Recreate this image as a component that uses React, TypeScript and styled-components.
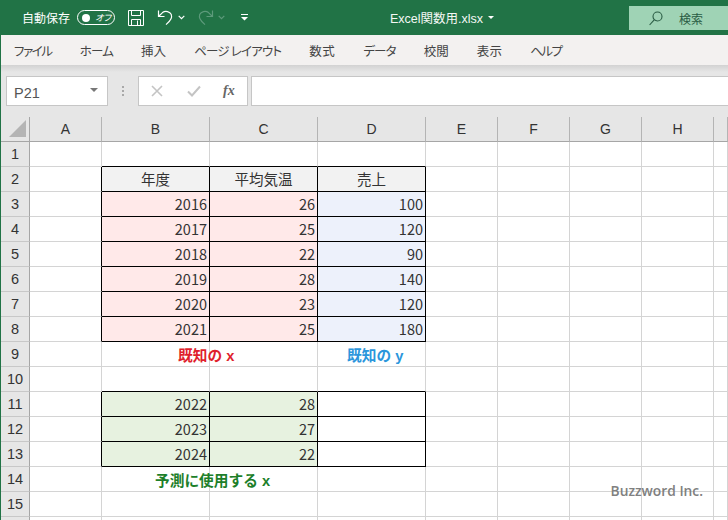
import React from "react";
import styled, { createGlobalStyle } from "styled-components";

const JP = `"Noto Sans CJK JP", "Liberation Sans", sans-serif`;

const GlobalStyle = createGlobalStyle`
  html, body {
    margin: 0;
    padding: 0;
    background: #fff;
    font-family: ${JP};
  }
`;

const Page = styled.div`
  width: 728px;
  height: 520px;
  overflow: hidden;
  position: relative;
  display: flex;
  flex-direction: column;
`;

const TitleBar = styled.header`
  height: 35px;
  flex: none;
  background: #217346;
  color: #fff;
  display: flex;
  align-items: center;
  font-size: 12px;
  padding-left: 22px;
`;

const AutoSave = styled.span`
  font-feature-settings: "palt";
  width: 55px;
  flex: none;
`;

const Toggle = styled.span`
  width: 38px;
  height: 15px;
  flex: none;
  box-sizing: border-box;
  border: 1px solid #fff;
  border-radius: 8px;
  display: flex;
  align-items: center;
  justify-content: space-between;
  padding: 0 3px 0 4px;
  font-size: 9px;
  font-style: italic;
  font-feature-settings: "palt";
  &::before {
    content: "";
    width: 8px;
    height: 8px;
    border-radius: 50%;
    background: #fff;
  }
`;

const QuickIcon = styled.svg<{ $gap: number }>`
  flex: none;
  margin-left: ${(p) => p.$gap}px;
  display: block;
`;

const FileName = styled.span`
  margin-left: 142px;
  width: 99px;
  flex: none;
  font-size: 12.5px;
  font-feature-settings: "palt";
  color: #f4f8f5;
  font-family: "Liberation Sans", ${JP};
`;

const SearchBox = styled.div`
  margin-left: 135px;
  flex: 1;
  height: 24px;
  margin-top: 1px;
  background: #9fd3b5;
  display: flex;
  align-items: center;
  padding-left: 20px;
  gap: 16px;
  color: #2a5c44;
  font-size: 12px;
`;

const TabBar = styled.nav`
  height: 30px;
  flex: none;
  background: #f3f1f0;
  display: flex;
  align-items: center;
  gap: 28px;
  padding-left: 13px;
  border-left: 1px solid #217346;
`;

const Tab = styled.span<{ $squeeze: number }>`
  font-size: 12.5px;
  letter-spacing: ${(p) => p.$squeeze}px;
  color: #444;
  font-feature-settings: "palt";
`;

const FormulaArea = styled.div`
  height: 52px;
  flex: none;
  box-sizing: border-box;
  border-left: 1px solid #217346;
  background: linear-gradient(#d2d2d2 0, #e6e6e6 7px);
  padding: 11px 0 11px 5px;
  display: flex;
  align-items: stretch;
`;

const NameBox = styled.div`
  width: 102px;
  box-sizing: border-box;
  background: #fff;
  border: 1px solid #c6c6c6;
  display: flex;
  align-items: center;
  justify-content: space-between;
  padding: 3px 9px 0 7px;
  font-size: 14.5px;
  color: #555;
  font-family: "Liberation Sans", sans-serif;
`;

const Caret = styled.span`
  border-left: 4px solid transparent;
  border-right: 4px solid transparent;
  border-top: 4px solid #777;
  margin-top: -6px;
`;

const Grip = styled.div`
  width: 30px;
  display: flex;
  flex-direction: column;
  align-items: center;
  justify-content: center;
  gap: 2px;
  & i {
    width: 2px;
    height: 2px;
    background: #a8a8a8;
  }
`;

const FxBox = styled.div`
  width: 110px;
  box-sizing: border-box;
  background: #fff;
  border: 1px solid #c6c6c6;
  display: flex;
  align-items: center;
  padding-left: 12px;
`;

const CheckIcon = styled.svg`
  margin-left: 24px;
`;

const FxMark = styled.span`
  margin-left: 22px;
  font-family: "Liberation Serif", serif;
  font-style: italic;
  font-weight: 700;
  font-size: 14px;
  color: #666;
`;

const FormulaInput = styled.div`
  flex: 1;
  margin-left: 3px;
  background: #fff;
  border: 1px solid #c6c6c6;
  border-right: 0;
`;

const Sheet = styled.div`
  flex: 1;
  min-height: 0;
  position: relative;
  border-left: 1px solid #217346;
  display: grid;
  grid-template-columns: 29px 72px 108px 108px 108px 72px 72px 72px 72px 1fr;
  grid-auto-rows: 25px;
  background: #fff;
`;

const Corner = styled.div`
  background: #e6e6e6;
  border-right: 1px solid #a6a6a6;
  border-bottom: 1px solid #a6a6a6;
  box-sizing: border-box;
  display: flex;
  align-items: flex-end;
  justify-content: flex-end;
  padding: 0 3px 4px 0;
  &::before {
    content: "";
    width: 0;
    height: 0;
    border-style: solid;
    border-width: 0 0 17px 17px;
    border-color: transparent transparent #b4b4b4 transparent;
  }
`;

const ColHead = styled.div`
  background: #e6e6e6;
  box-sizing: border-box;
  border-right: 1px solid #b4b4b4;
  border-bottom: 1px solid #a6a6a6;
  display: flex;
  align-items: center;
  justify-content: center;
  font: 14px "Liberation Sans", sans-serif;
  color: #333;
`;

const RowHead = styled.div<{ $row: number }>`
  grid-row: ${(p) => p.$row + 1};
  grid-column: 1;
  background: #e6e6e6;
  box-sizing: border-box;
  border-right: 1px solid #a6a6a6;
  border-bottom: 1px solid #c8c8c8;
  display: flex;
  align-items: center;
  justify-content: center;
  font: 14.5px "Liberation Sans", sans-serif;
  color: #333;
`;

const Cell = styled.div<{
  $row: number;
  $col: number;
  $fill?: string;
  $edgeRight: boolean;
  $edgeBottom: boolean;
  $center?: boolean;
}>`
  grid-row: ${(p) => p.$row + 1};
  grid-column: ${(p) => p.$col + 2};
  background: ${(p) => p.$fill ?? "#fff"};
  box-sizing: border-box;
  border-right: 1px solid ${(p) => (p.$edgeRight ? "#000" : "#d4d4d4")};
  border-bottom: 1px solid ${(p) => (p.$edgeBottom ? "#000" : "#d4d4d4")};
  display: flex;
  align-items: center;
  justify-content: ${(p) => (p.$center ? "center" : "flex-end")};
  padding: 0 ${(p) => (p.$center ? 0 : 2)}px 2px 0;
  font-size: 14.5px;
  color: #333;
`;

const NoteLabel = styled.div<{ $row: number; $col: number; $indent: number; $color: string }>`
  grid-row: ${(p) => p.$row + 1};
  grid-column: ${(p) => p.$col + 2} / span 3;
  padding: 0 0 1px ${(p) => p.$indent}px;
  display: flex;
  align-items: center;
  font-family: "Liberation Sans", ${JP};
  font-size: 14.7px;
  font-weight: 700;
  color: ${(p) => p.$color};
  pointer-events: none;
`;

const Watermark = styled.div`
  position: absolute;
  right: 25px;
  bottom: 20px;
  font: 600 13.8px "Open Sans", sans-serif;
  color: #808080;
`;

const RED = "#ffe9e9";
const BLUE = "#edf1fb";
const GREEN = "#e7f2e0";
const HEAD = "#f2f2f2";

const TABS: [string, number][] = [
  ["ファイル", -1.4],
  ["ホーム", -0.8],
  ["挿入", 0],
  ["ページ レイアウト", -0.8],
  ["数式", 0.5],
  ["データ", -0.8],
  ["校閲", 0],
  ["表示", 0.2],
  ["ヘルプ", -1.5],
];
const COLS = ["A", "B", "C", "D", "E", "F", "G", "H", "I"];

// row number -> values of columns B, C, D
const DATA: Record<number, string[]> = {
  2: ["年度", "平均気温", "売上"],
  3: ["2016", "26", "100"],
  4: ["2017", "25", "120"],
  5: ["2018", "22", "90"],
  6: ["2019", "28", "140"],
  7: ["2020", "23", "120"],
  8: ["2021", "25", "180"],
  11: ["2022", "28", ""],
  12: ["2023", "27", ""],
  13: ["2024", "22", ""],
};

const inBox = (row: number, col: number) =>
  col >= 1 && col <= 3 && ((row >= 2 && row <= 8) || (row >= 11 && row <= 13));

const fillFor = (row: number, col: number) => {
  if (!inBox(row, col)) return undefined;
  if (row === 2) return HEAD;
  if (row >= 11) return col === 3 ? undefined : GREEN;
  return col === 3 ? BLUE : RED;
};

const App = () => {
  const rows = Array.from({ length: 16 }, (_, i) => i + 1);

  return (
    <Page>
      <GlobalStyle />
      <TitleBar>
        <AutoSave>自動保存</AutoSave>
        <Toggle>オフ</Toggle>
        <QuickIcon $gap={13} width="16" height="16" viewBox="0 0 16 16" fill="none" stroke="#fff" strokeWidth="1">
          <path d="M.5.5h15v15H.5z" />
          <path d="M3.5.5v5h9v-5M3.5 15.5v-6h9v6M9.5 10.5v5" />
        </QuickIcon>
        <QuickIcon $gap={13} width="17" height="17" viewBox="0 0 17 17" fill="none" stroke="#fff" strokeWidth="1.2">
          <path d="M1.5 1.5v6h6M1.8 7.2L5.5 3.6c3-2.2 7.5-1 8.8 2 1.2 3-.2 5.8-5.3 10" />
        </QuickIcon>
        <QuickIcon $gap={4} width="7" height="5" viewBox="0 0 7 5" fill="none" stroke="#fff" strokeWidth="1.2">
          <path d="M.7.8l2.8 2.8L6.3.8" />
        </QuickIcon>
        <QuickIcon $gap={12} width="17" height="17" viewBox="0 0 17 17" fill="none" stroke="#5d9a7b" strokeWidth="1.2">
          <path d="M15.5 1.5v6h-6M15.2 7.2L11.5 3.6c-3-2.2-7.5-1-8.8 2-1.2 3 .2 5.8 5.3 10" />
        </QuickIcon>
        <QuickIcon $gap={4} width="7" height="5" viewBox="0 0 7 5" fill="none" stroke="#5d9a7b" strokeWidth="1.2">
          <path d="M.7.8l2.8 2.8L6.3.8" />
        </QuickIcon>
        <QuickIcon $gap={16} width="7" height="7" viewBox="0 0 7 7" fill="#fff">
          <path d="M0 0h7v1H0zM0 3h7L3.5 6.5z" />
        </QuickIcon>
        <FileName>Excel関数用.xlsx</FileName>
        <QuickIcon $gap={-1} width="6" height="3" viewBox="0 0 6 3" fill="#fff">
          <path d="M0 0h6L3 3z" />
        </QuickIcon>
        <SearchBox>
          <svg width="14" height="15" viewBox="0 0 14 15" fill="none" stroke="#2a5c44" strokeWidth="1.1">
            <circle cx="8.5" cy="5.5" r="4.5" />
            <path d="M5.2 8.8L.6 14" />
          </svg>
          検索
        </SearchBox>
      </TitleBar>

      <TabBar>
        {TABS.map(([t, squeeze]) => (
          <Tab key={t} $squeeze={squeeze}>{t}</Tab>
        ))}
      </TabBar>

      <FormulaArea>
        <NameBox>
          P21
          <Caret />
        </NameBox>
        <Grip>
          <i />
          <i />
          <i />
        </Grip>
        <FxBox>
          <svg width="12" height="12" viewBox="0 0 12 12" fill="none" stroke="#c4c4c4" strokeWidth="1.6">
            <path d="M1 1l10 10M11 1L1 11" />
          </svg>
          <CheckIcon width="14" height="12" viewBox="0 0 14 12" fill="none" stroke="#c4c4c4" strokeWidth="2">
            <path d="M1 6.5l4 4L13 1.5" />
          </CheckIcon>
          <FxMark>fx</FxMark>
        </FxBox>
        <FormulaInput />
      </FormulaArea>

      <Sheet>
        <Corner />
        {COLS.map((c) => (
          <ColHead key={c}>{c === "I" ? "" : c}</ColHead>
        ))}
        {rows.map((row) => (
          <React.Fragment key={row}>
            <RowHead $row={row}>{row < 16 ? row : ""}</RowHead>
            {COLS.map((_, col) => (
              <Cell
                key={col}
                $row={row}
                $col={col}
                $fill={fillFor(row, col)}
                $edgeRight={inBox(row, col) || inBox(row, col + 1)}
                $edgeBottom={inBox(row, col) || inBox(row + 1, col)}
                $center={row === 2}
              >
                {col >= 1 && col <= 3 ? DATA[row]?.[col - 1] : ""}
              </Cell>
            ))}
          </React.Fragment>
        ))}
        <NoteLabel $row={9} $col={1} $indent={76} $color="#e01f2d">既知の x</NoteLabel>
        <NoteLabel $row={9} $col={3} $indent={29} $color="#2b96dc">既知の y</NoteLabel>
        <NoteLabel $row={14} $col={1} $indent={53} $color="#1d7f2a">予測に使用する x</NoteLabel>
        <Watermark>Buzzword Inc.</Watermark>
      </Sheet>
    </Page>
  );
};

export default App;
